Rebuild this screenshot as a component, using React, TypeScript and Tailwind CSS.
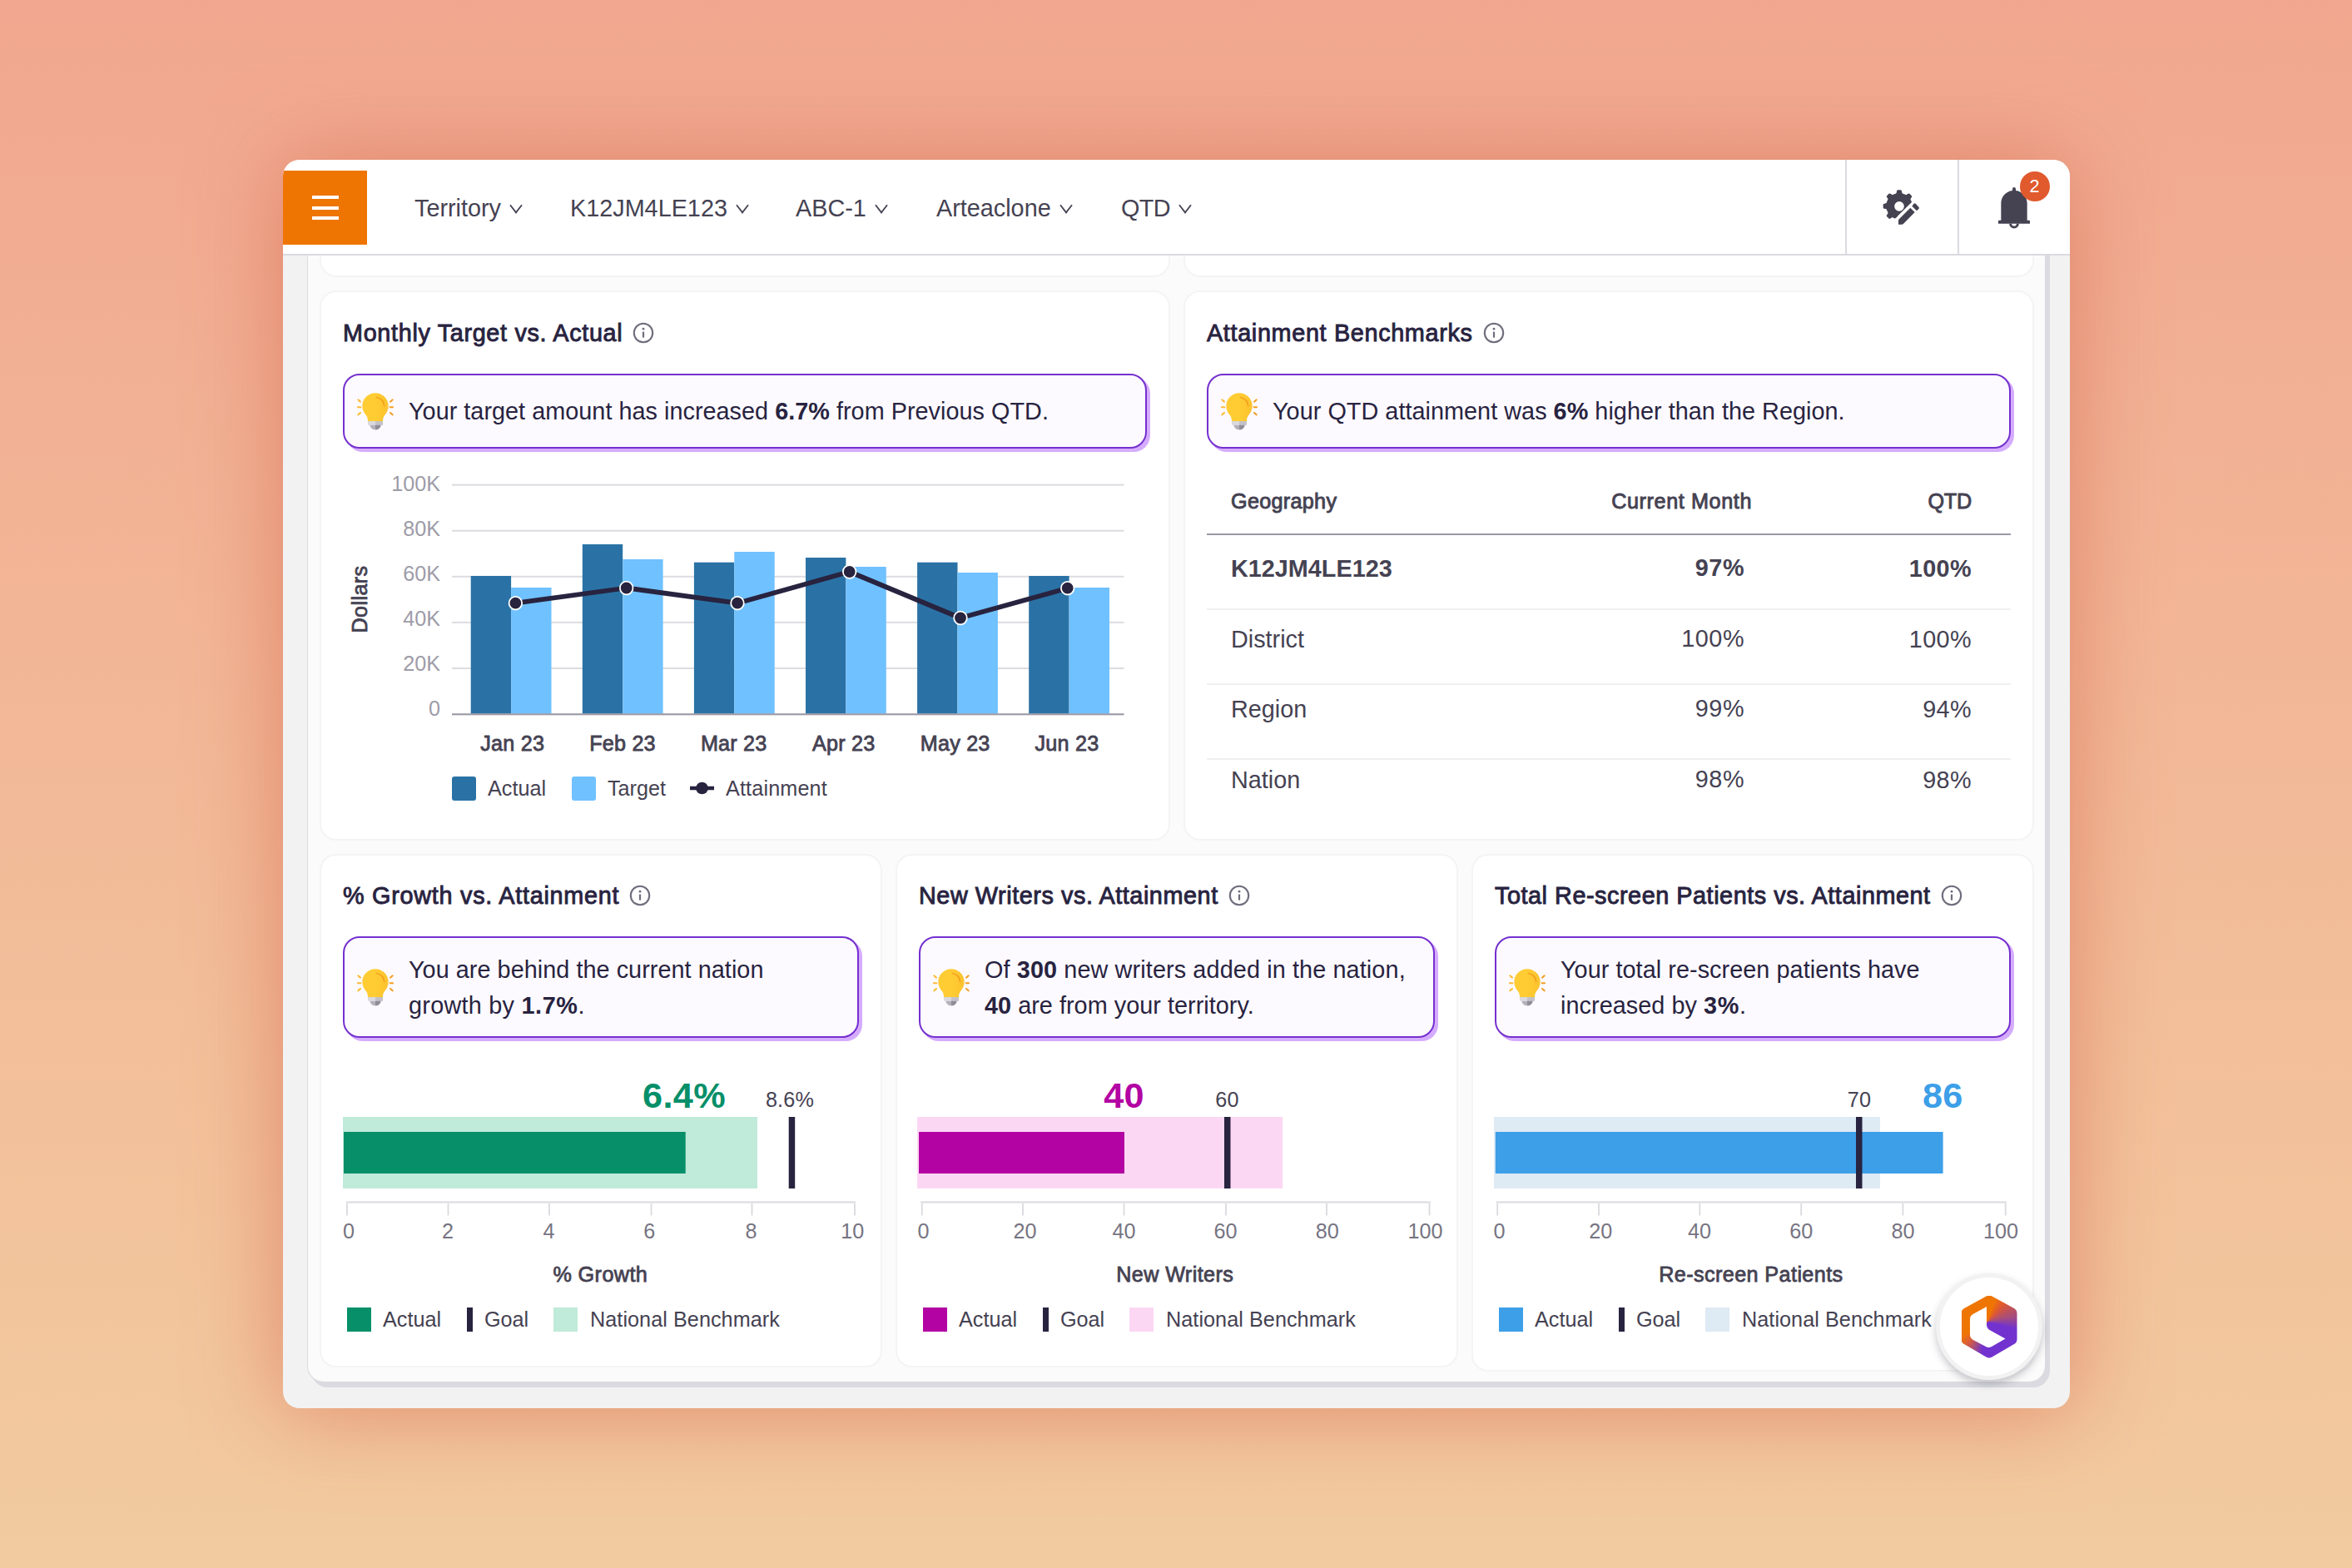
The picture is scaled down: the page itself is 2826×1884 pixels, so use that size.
import type { ReactNode } from "react";

const INK = "#28233f";

const SANS = "font-['Liberation_Sans',Arial,sans-serif]";
const MEDIUM = "[-webkit-text-stroke:0.9px_currentColor]";

function Chevron() {
  return (
    <svg width="16" height="12" viewBox="0 0 16 12" className="mt-[1px]">
      <path d="M1 1.2 8 10.4 15 1.2" fill="none" stroke="#454252" strokeWidth="1.8" />
    </svg>
  );
}

function InfoIcon() {
  return (
    <svg width="26" height="26" viewBox="0 0 26 26">
      <circle cx="13" cy="13" r="11.2" fill="none" stroke="#6f6c7b" strokeWidth="2.1" />
      <path d="M13 11.6v7" stroke="#6f6c7b" strokeWidth="2.2" />
      <circle cx="13" cy="8.2" r="1.4" fill="#6f6c7b" />
    </svg>
  );
}

function Bulb() {
  return (
    <svg width="44" height="46" viewBox="0 0 132 138" className="shrink-0">
      <defs>
        <linearGradient id="glass" x1="0" x2="1" y1="0" y2="0">
          <stop offset="0.5" stopColor="#ffcc33" />
          <stop offset="1" stopColor="#fcc22f" />
        </linearGradient>
      </defs>
      <path
        d="M66 4C40 4 19 25 19 50c0 14 6 25 13 33 5 6 7 13 7 23h54c0-10 2-17 7-23 7-8 13-19 13-33C113 25 92 4 66 4Z"
        fill="url(#glass)"
      />
      <path d="M70 19c17 4 27 14 28 31" fill="none" stroke="#f39a1c" strokeWidth="4" strokeLinecap="round" />
      <path d="M39 105h54v14H39Z" fill="#d9d8dd" />
      <path d="M66 105h27v14H66Z" fill="#c3c2c9" />
      <path d="M46 119h40c-2 10-9 17-20 17s-18-7-20-17Z" fill="#b3b2ba" />
      <path d="M66 119h20c-2 10-9 17-20 17Z" fill="#8f8e98" />
      <g stroke="#fdb92e" strokeWidth="6" strokeLinecap="round">
        <path d="m4 28 8 7M3 55h10M4 82l8-7" />
        <path d="m128 28-8 7M129 55h-10M128 82l-8-7" stroke="#f59c1f" />
      </g>
    </svg>
  );
}

function GearPencil() {
  return (
    <svg width="47" height="44" viewBox="125 80 141 132">
      <defs>
        <clipPath id="gear-cut">
          <path d="M100 60H300L100 260Z" />
        </clipPath>
      </defs>
      <g clipPath="url(#gear-cut)" fill="#454252">
        <path
          fillRule="evenodd"
          d="M188 95a47 47 0 1 1 0 94 47 47 0 0 1 0-94Zm0 30a17.500 17.500 0 1 0 0 35 17.500 17.500 0 0 0 0-35Z"
        />
        {[0, 45, 90, 135, 180, 225, 270, 315].map((a) => (
          <path
            key={a}
            d="M171 104c5-3 7-8 8-16q.6-4 4-4h10q3.400 0 4 4c1 8 3 13 8 16Z"
            transform={`rotate(${a} 188 142)`}
          />
        ))}
      </g>
      <path d="m228 148 16 16-39 40q-3 4-7 4h-13v-14q0-3 3-6Z" fill="#454252" />
      <path d="m240 134q4-4 8 0l10 11q4 4 0 7l-7 7-17-17Z" fill="#454252" />
    </svg>
  );
}

function Bell() {
  return (
    <svg width="40" height="52" viewBox="540 71 120 156">
      <path
        d="M594 80q0-6 6-6t6 6v6c24 3 41 22 41 46v61h7q3 0 3 3v9H543v-9q0-3 3-3h7v-61c0-24 17-43 41-46Z"
        fill="#454252"
      />
      <path d="M587 205a13 13 0 0 0 26 0" fill="none" stroke="#454252" strokeWidth="9" />
    </svg>
  );
}

function Card({ className = "", children }: { className?: string; children?: ReactNode }) {
  return (
    <section className={`rounded-[20px] border-2 border-[#f4f4f5] bg-white px-[26px] ${className}`}>{children}</section>
  );
}

function Title({ children, tracking }: { children: ReactNode; tracking: string }) {
  return (
    <h2 className="flex h-9 items-center gap-3 whitespace-nowrap text-[28.8px] leading-9 text-[#28233f]">
      <span className={`${MEDIUM} ${tracking}`}>{children}</span>
      <InfoIcon />
    </h2>
  );
}

function Insight({ className = "", children }: { className?: string; children: ReactNode }) {
  return (
    <div
      className={`mt-[31px] flex items-center gap-[18px] whitespace-nowrap rounded-[20px] border-2 border-[#7530cf] bg-[#fcfaff] pl-[15px] text-[28.8px] leading-[43.2px] text-[#28233f] shadow-[4px_4px_0_#d5acfd] ${className}`}
    >
      <Bulb />
      <p className="pt-[2px]">{children}</p>
    </div>
  );
}

const months = [
  { name: "Jan 23", x: 203.7, actual: 132, target: 146, px: 207.4, py: 164.7 },
  { name: "Feb 23", x: 336, actual: 94, target: 112, px: 340.7, py: 146.5 },
  { name: "Mar 23", x: 469.7, actual: 115.7, target: 103, px: 474, py: 164.7 },
  { name: "Apr 23", x: 601.7, actual: 110, target: 121, px: 608.7, py: 127 },
  { name: "May 23", x: 735.7, actual: 115.7, target: 128, px: 742, py: 182.5 },
  { name: "Jun 23", x: 870, actual: 132, target: 146, px: 870.7, py: 146.7 },
];

function MonthlyChart() {
  return (
    <svg width="964" height="350" viewBox="0 0 964 350" className="mt-[21px] block text-[25.200px]">
      {["100K", "80K", "60K", "40K", "20K", "0"].map((label, i) => (
        <g key={label}>
          <text x="117" y={30.2 + 53.9 * i} textAnchor="end" fill="#9d9ca8">
            {label}
          </text>
          <rect x="131" y={21.6 + 55.1 * i} width="807.500" height="2" fill="#dcdce1" />
        </g>
      ))}
      <text
        transform="translate(29 160) rotate(-90)"
        textAnchor="middle"
        fill="#454252"
        stroke="#454252"
        strokeWidth="0.800"
        className="tracking-[0.400px]"
      >
        Dollars
      </text>
      {months.map((m, i) => (
        <g key={m.name}>
          <rect x={153.7 + 134.1 * i} y={m.actual} width="48.400" height={297.500 - m.actual} fill="#2a72a5" />
          <rect x={202.1 + 134.1 * i} y={m.target} width="48.400" height={297.500 - m.target} fill="#70c1ff" />
          <text
            x={m.x}
            y="341.700"
            textAnchor="middle"
            fill="#454252"
            stroke="#454252"
            strokeWidth="0.800"
            className="tracking-[0.200px]"
          >
            {m.name}
          </text>
        </g>
      ))}
      <rect x="131" y="297.300" width="807.500" height="2" fill="#9b99a5" />
      <polyline
        points={months.map((m) => `${m.px},${m.py}`).join(" ")}
        fill="none"
        stroke={INK}
        strokeWidth="5.800"
        strokeLinejoin="round"
      />
      {months.map((m) => (
        <circle key={m.name} cx={m.px} cy={m.py} r="7.800" fill={INK} stroke="#fff" strokeWidth="1.800" />
      ))}
    </svg>
  );
}

function MonthlyLegend() {
  return (
    <div className="mt-[22px] flex h-[30px] items-center pl-[131px] text-[25.200px] leading-[30px] text-[#454252]">
      <span className="h-[29px] w-[29px] rounded-[3px] bg-[#2a72a5]" />
      <span className="ml-[14px] w-[101px]">Actual</span>
      <span className="h-[29px] w-[29px] rounded-[3px] bg-[#70c1ff]" />
      <span className="ml-[14px] w-[99px]">Target</span>
      <svg width="29" height="16" viewBox="0 0 29 16">
        <path d="M0 8h29" stroke={INK} strokeWidth="4.500" />
        <circle cx="14.500" cy="8" r="7.300" fill={INK} />
      </svg>
      <span className="ml-[14px] tracking-[0.150px]">Attainment</span>
    </div>
  );
}

const rows = [
  { name: "K12JM4LE123", month: "97%", qtd: "100%", style: "h-[90px] pt-[22px] font-bold border-b-2" },
  { name: "District", month: "100%", qtd: "100%", style: "h-[90px] pt-[17px] border-b-2" },
  { name: "Region", month: "99%", qtd: "94%", style: "h-[90px] pt-[11px] border-b-2" },
  { name: "Nation", month: "98%", qtd: "98%", style: "h-[60px] pt-[6px]" },
];

function BenchmarkTable() {
  return (
    <div className="mt-[42px] text-[28.800px] leading-9 text-[#454252]">
      <div
        className={`flex h-[62px] border-b-2 border-[#9b99a5] pl-[29px] text-[25.200px] leading-[42px] ${MEDIUM}`}
      >
        <span className="w-[320px] tracking-[0.300px]">Geography</span>
        <span className="w-[306px] text-right tracking-[0.600px]">Current Month</span>
        <span className="w-[264px] text-right tracking-[-0.200px]">QTD</span>
      </div>
      {rows.map((r) => (
        <div key={r.name} className={`flex border-[#eff0f2] pl-[29px] ${r.style}`}>
          <span className="w-[320px]">{r.name}</span>
          <span className="-mt-[1.500px] w-[297px] text-right tracking-[0.500px]">{r.month}</span>
          <span className="w-[273px] text-right tracking-[0.400px]">{r.qtd}</span>
        </div>
      ))}
    </div>
  );
}

type Bullet = {
  label: string;
  labelX: number;
  ticks: { x: number; tx: number; text: string }[];
  axis: [number, number];
  bench: [number, number];
  actual: [number, number];
  goal: number;
  value: { text: string; x: number };
  goalText: { text: string; x: number };
  color: string;
  soft: string;
};

function BulletChart({ b }: { b: Bullet }) {
  return (
    <>
      <svg width="646" height="280" viewBox="0 0 646 280" className="mt-[32px] block overflow-visible text-[25.200px]">
        <text
          x={b.value.x}
          y="52"
          textAnchor="middle"
          fill={b.color}
          className="text-[43.200px] font-bold tracking-[0.400px]"
        >
          {b.value.text}
        </text>
        <text x={b.goalText.x} y="51" textAnchor="middle" fill="#454252" className="tracking-[0.200px]">
          {b.goalText.text}
        </text>
        <rect x={b.bench[0]} y="63" width={b.bench[1] - b.bench[0]} height="86" fill={b.soft} />
        <rect x={b.actual[0]} y="81" width={b.actual[1] - b.actual[0]} height="50" fill={b.color} />
        <rect x={b.goal} y="63" width="7.500" height="86" fill={INK} />
        <rect x={b.axis[0]} y="164.500" width={b.axis[1] - b.axis[0]} height="2" fill="#dadadf" />
        {b.ticks.map((t) => (
          <g key={t.text}>
            <rect x={t.x - 0.9} y="167" width="1.800" height="14.500" fill="#dadadf" />
            <text x={t.tx} y="209" textAnchor="middle" fill="#767482">
              {t.text}
            </text>
          </g>
        ))}
        <text
          x={b.labelX}
          y="261.300"
          textAnchor="middle"
          fill="#454252"
          stroke="#454252"
          strokeWidth="0.800"
          className="tracking-[0.400px]"
        >
          {b.label}
        </text>
      </svg>
      <div className="mt-[12px] flex h-[29px] items-center whitespace-nowrap pl-[5px] text-[25.200px] leading-[29px] text-[#454252]">
        <span className="h-[29px] w-[29px] shrink-0" style={{ background: b.color }} />
        <span className="ml-[14px] w-[101px] shrink-0">Actual</span>
        <span className="h-[29px] w-[7px] shrink-0 bg-[#28233f]" />
        <span className="ml-[14px] w-[83px] shrink-0">Goal</span>
        <span className="h-[29px] w-[29px] shrink-0" style={{ background: b.soft }} />
        <span className="ml-[15px] tracking-[0.060px]">National Benchmark</span>
      </div>
    </>
  );
}

const growth: Bullet = {
  label: "% Growth",
  labelX: 309.3,
  ticks: [
    { x: 5, tx: 7, text: "0" },
    { x: 126.5, tx: 126, text: "2" },
    { x: 248, tx: 247.6, text: "4" },
    { x: 370.500, tx: 368.2, text: "6" },
    { x: 491.500, tx: 490.6, text: "8" },
    { x: 615, tx: 612.2, text: "10" },
  ],
  axis: [4, 616],
  bench: [0, 498],
  actual: [1, 411.700],
  goal: 535.700,
  value: { text: "6.4%", x: 410 },
  goalText: { text: "8.6%", x: 537 },
  color: "#068f69",
  soft: "#c0ead9",
};

const writers: Bullet = {
  label: "New Writers",
  labelX: 307.7,
  ticks: [
    { x: 3.8, tx: 5.6, text: "0" },
    { x: 125, tx: 127.500, text: "20" },
    { x: 246.500, tx: 246.4, text: "40" },
    { x: 369, tx: 368.500, text: "60" },
    { x: 490, tx: 490.700, text: "80" },
    { x: 613.500, tx: 608.6, text: "100" },
  ],
  axis: [2, 615],
  bench: [-2, 437.200],
  actual: [0, 247],
  goal: 367,
  value: { text: "40", x: 246.600 },
  goalText: { text: "60", x: 370.400 },
  color: "#b304a3",
  soft: "#fcd7f4",
};

const patients: Bullet = {
  label: "Re-screen Patients",
  labelX: 307.9,
  ticks: [
    { x: 3.2, tx: 5.4, text: "0" },
    { x: 125, tx: 127.3, text: "20" },
    { x: 246.3, tx: 246.1, text: "40" },
    { x: 368.2, tx: 368.2, text: "60" },
    { x: 490.4, tx: 490.6, text: "80" },
    { x: 613.700, tx: 607.9, text: "100" },
  ],
  axis: [1.500, 615],
  bench: [-1, 463],
  actual: [0.800, 538.600],
  goal: 434,
  value: { text: "86", x: 538.300 },
  goalText: { text: "70", x: 438 },
  color: "#3d9fe8",
  soft: "#deeaf4",
};

function Assistant() {
  return (
    <button className="absolute bottom-[34px] right-[33px] flex h-[128px] w-[128px] items-center justify-center rounded-full border-[5px] border-[#f2f2f3] bg-white shadow-[0_5px_10px_rgba(60,60,80,0.28)]">
      <span className="h-[75px] w-[67px] bg-[conic-gradient(from_0deg_at_31px_31px,#ef7503_0deg,#ef7503_18deg,#e0592e_40deg,#a44c80_80deg,#7232cf_105deg,#7232cf_190deg,#a44c80_206deg,#d95c3c_222deg,#ef7503_240deg,#ef7503_360deg)] [clip-path:path(evenodd,'M30,1Q33.500,-1,37,1L63.500,15.500Q67,17.500,67,21.500L67,52.500Q67,56.500,63.500,58.500L37,74Q33.500,76,30,74L3.500,58.500Q0,56.500,0,52.500L0,21.500Q0,17.500,3.500,15.500ZM30.500,13.500L14,22.500Q10.500,24.500,10.500,28.500L10.500,48Q10.500,51,13.500,53L29.500,61.500Q33,63.500,36.500,61.500L53,52L34,41.500Q30.500,39,30.500,35Z')]" />
    </button>
  );
}

const filters = [
  { label: "Territory", width: "w-[187px]" },
  { label: "K12JM4LE123", width: "w-[271px]" },
  { label: "ABC-1", width: "w-[169px]" },
  { label: "Arteaclone", width: "w-[222px]" },
  { label: "QTD", width: "w-[100px] tracking-[-0.600px]" },
];

export default function App() {
  return (
    <div
      className={`h-[1884px] w-[2826px] overflow-hidden bg-linear-to-b from-[#f1a78f] to-[#f2cba0] pl-[340px] pt-[192px] ${SANS}`}
    >
      <main className="relative h-[1500px] w-[2147px] overflow-hidden rounded-[20px] bg-[#f2f2f2] shadow-[0_2px_105px_rgba(215,108,82,0.66)]">
        <header className="flex h-[115px] border-b-2 border-[#dadae0] bg-white">
          <button className="mt-[13px] flex h-[89px] w-[101px] flex-col items-center justify-center gap-[8.500px] bg-[#ef7503]">
            <span className="h-1 w-8 bg-white" />
            <span className="h-1 w-8 bg-white" />
            <span className="h-1 w-8 bg-white" />
          </button>
          <nav className="ml-[57px] flex flex-1 items-center pt-[3px] text-[28.800px] leading-9 text-[#454252]">
            {filters.map((f) => (
              <span key={f.label} className={`flex shrink-0 items-center gap-[10px] ${f.width}`}>
                {f.label}
                <Chevron />
              </span>
            ))}
          </nav>
          <div className="flex w-[135px] items-center justify-center border-l-2 border-[#dadae0] pr-[3px]">
            <GearPencil />
          </div>
          <div className="flex w-[135px] items-center justify-center border-l-2 border-[#dadae0] pr-[2px] pt-[2px]">
            <span className="relative">
              <Bell />
              <span className="absolute -top-[18px] left-[27px] flex h-9 w-9 items-center justify-center rounded-full bg-[#e05a2e] text-[21.600px] leading-none text-white">
                2
              </span>
            </span>
          </div>
        </header>

        <div className="ml-[29px] flex h-[1354px] w-[2089px] flex-col gap-4 rounded-b-[20px] border border-t-0 border-[#dadae0] bg-[#fbfbfb] pl-[14px] pr-3 shadow-[5px_0_0_#dadae0,5px_6px_0_#dadae0]">
          <div className="flex h-[26px] gap-4">
            <Card className="w-[1022px] rounded-t-none border-t-0" />
            <Card className="w-[1022px] rounded-t-none border-t-0" />
          </div>
          <div className="flex h-[661px] gap-4">
            <Card className="w-[1022px] pt-[31px]">
              <Title tracking="tracking-[0.670px]">Monthly Target vs. Actual</Title>
              <Insight className="h-[90px] tracking-[0.030px]">
                Your target amount has increased <b>6.7%</b> from Previous QTD.
              </Insight>
              <MonthlyChart />
              <MonthlyLegend />
            </Card>
            <Card className="w-[1022px] pt-[31px]">
              <Title tracking="tracking-[0.660px]">Attainment Benchmarks</Title>
              <Insight className="h-[90px] tracking-[0.040px]">
                Your QTD attainment was <b>6%</b> higher than the Region.
              </Insight>
              <BenchmarkTable />
            </Card>
          </div>
          <div className="flex items-start gap-4">
            <Card className="h-[617px] w-[676px] pt-[30px]">
              <Title tracking="tracking-[0.740px]">% Growth vs. Attainment</Title>
              <Insight className="h-[122px] tracking-[0.050px]">
                You are behind the current nation
                <br />
                <span className="tracking-[0.260px]">
                  growth by <b className="tracking-[0.600px]">1.7%</b>.
                </span>
              </Insight>
              <BulletChart b={growth} />
            </Card>
            <Card className="h-[617px] w-[676px] pt-[30px]">
              <Title tracking="tracking-[0.560px]">New Writers vs. Attainment</Title>
              <Insight className="h-[122px] tracking-[0.120px]">
                Of <b>300</b> new writers added in the nation,
                <br />
                <span className="tracking-[0.040px]">
                  <b>40</b> are from your territory.
                </span>
              </Insight>
              <BulletChart b={writers} />
            </Card>
            <Card className="h-[622px] w-[676px] pt-[30px]">
              <Title tracking="tracking-[0.540px]">Total Re-screen Patients vs. Attainment</Title>
              <Insight className="h-[122px] tracking-[0.060px]">
                Your total re-screen patients have
                <br />
                increased by <b className="tracking-[0.600px]">3%</b>.
              </Insight>
              <BulletChart b={patients} />
            </Card>
          </div>
        </div>
        <Assistant />
      </main>
    </div>
  );
}
